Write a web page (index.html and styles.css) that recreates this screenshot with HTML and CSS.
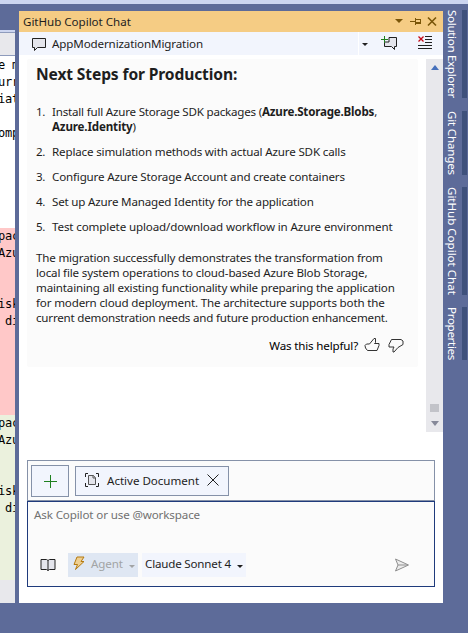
FILE: index.html
```html
<!DOCTYPE html>
<html lang="en">
<head>
<meta charset="utf-8">
<title>GitHub Copilot Chat</title>
<link rel="stylesheet" href="styles.css">
</head>
<body>
<div class="topstrip"></div>
<div class="shell">
  <aside class="editor">
    <div class="tab"></div>
    <pre class="code plain">e m
urr
iat

omp</pre>
    <pre class="code removed">pac
Azu


isk
 di</pre>
    <pre class="code added">pac
Azu


isk
 di</pre>
    <div class="editor-foot"></div>
  </aside>

  <main class="panel">
    <header class="titlebar">
      <span class="t open">GitHub Copilot Chat</span>
      <svg class="title-icons" width="44" height="21" viewBox="0 0 44 21">
        <path class="gold-fill" d="M1 8h8l-4 4z"/>
        <path class="gold" d="M16 10.5h5M21.5 7v7M21.5 8.5h5v4h-5M21.5 11.5h5M26.5 8v5"/>
        <path class="gold wide" d="M34 6.500l8 8M42 6.500l-8 8"/>
      </svg>
    </header>

    <div class="thread">
      <div class="thread-name">
        <svg width="16" height="16" viewBox="0 0 16 16"><path class="bubble" d="M1.500 2.500h13v9h-8l-3 3v-3h-2z"/></svg>
        <span class="t soft">AppModernizationMigration</span>
      </div>
      <div class="thread-tools">
        <svg width="84" height="22" viewBox="0 0 84 22">
          <path class="ink-fill" d="M3 11h6l-3 3z"/>
          <path class="bubble" d="M25.500 10v4.500h7l3 3v-3h2v-9h-7.500v4.500z"/>
          <path class="green" d="M25.500 4v7M22 7.500h7"/>
          <path class="red" d="M59.500 4.500l5 5M64.500 4.500l-5 5"/>
          <path class="ink" d="M66 4.500h7M66 7.500h7M66 10.500h7M59 13.500h14M59 16.500h14"/>
        </svg>
      </div>
    </div>

    <div class="conversation">
      <article class="message">
        <h1 class="t soft">Next Steps for Production:</h1>
        <ol>
          <li><span class="t tight">Install full Azure Storage SDK packages (<b>Azure.Storage.Blobs</b>,</span><br><span class="t"><b>Azure.Identity</b>)</span></li>
          <li><span class="t">Replace simulation methods with actual Azure SDK calls</span></li>
          <li><span class="t">Configure Azure Storage Account and create containers</span></li>
          <li><span class="t snug">Set up Azure Managed Identity for the application</span></li>
          <li><span class="t soft">Test complete upload/download workflow in Azure environment</span></li>
        </ol>
        <p>
          <span class="t snug">The migration successfully demonstrates the transformation from</span><br>
          <span class="t">local file system operations to cloud-based Azure Blob Storage,</span><br>
          <span class="t">maintaining all existing functionality while preparing the application</span><br>
          <span class="t">for modern cloud deployment. The architecture supports both the</span><br>
          <span class="t tight">current demonstration needs and future production enhancement.</span>
        </p>
        <div class="feedback">
          <span class="t">Was this helpful?</span>
          <svg width="16" height="16" viewBox="0 0 16 16"><path class="thumb" d="M1 8.500L2.500 7h3L10 1.500h1.500v4L10.500 6.500h4.500v2L13 13.500H3.500L1.500 11z"/></svg>
          <svg class="down-vote" width="16" height="16" viewBox="0 0 16 16"><path class="thumb" d="M1 7.500L3.500 2.500h9.500L15 4v3.500l-5 3-4 4.500H5v-3L6 10H1z"/></svg>
        </div>
      </article>
      <div class="scrollbar">
        <i class="arrow up"></i>
        <span class="thumb-box"></span>
        <i class="arrow down"></i>
      </div>
    </div>

    <section class="composer">
      <div class="attachments">
        <div class="add"><svg width="14" height="14" viewBox="0 0 14 14"><path class="green" d="M7.500 1v13M1 7.500h13"/></svg></div>
        <div class="chip">
          <svg width="16" height="16" viewBox="0 0 16 16"><path class="ink" d="M1.500 5V1.500H4M12 1.500h2.500V5M14.500 11v3.500H12M4 14.500H1.500V11"/><path class="bubble thin" d="M4.500 3.500h5L11.500 6v6.500h-7zM9 3.500V6h2.500"/></svg>
          <span class="t open">Active Document</span>
          <svg class="close" width="12" height="12" viewBox="0 0 12 12"><path class="ink" d="M.5.500l11 11M11.500.500l-11 11"/></svg>
        </div>
      </div>
      <div class="prompt">
        <div class="placeholder"><span class="t soft">Ask Copilot or use @workspace</span></div>
        <div class="controls">
          <svg class="book" width="16" height="14" viewBox="0 0 16 14"><path class="bubble" d="M1 1.500h5.500L8 2.500 9.500 1.500H15v10H9.500L8 12.500 6.500 11.500H1zM8 2.500v10"/></svg>
          <div class="mode">
            <svg width="12" height="15" viewBox="0 0 12 15"><path class="bolt" d="M4 1h7L8 5.500h3L2.500 13.500 4.500 8.500H1z"/></svg>
            <span class="t soft">Agent</span><i class="caret"></i>
          </div>
          <div class="model"><span class="t snug">Claude Sonnet 4</span><i class="caret"></i></div>
          <svg class="send" width="16" height="14" viewBox="0 0 16 14"><path d="M1.500 1L14.500 7l-13 6L4 7zM4 7h10"/></svg>
        </div>
      </div>
    </section>
  </main>

  <nav class="rail">
    <div class="dock d1"><span class="t dense">Solution Explorer</span></div>
    <div class="dock d2"><span class="t snug">Git Changes</span></div>
    <div class="dock d3"><span class="t open">GitHub Copilot Chat</span></div>
    <div class="dock d4"><span class="t dense">Properties</span></div>
  </nav>
</div>
</body>
</html>
```
FILE: styles.css
```css
* { box-sizing: border-box; }
body {
  margin: 0;
  width: 468px;
  height: 633px;
  overflow: hidden;
  background: #5d6b99;
  color: #1e1e1e;
  font: 11.6px/15px "Noto Sans", "Open Sans", sans-serif;
}
svg { display: block; flex: none; fill: none; }
h1, p, ol, pre { margin: 0; }

.t { white-space: nowrap; letter-spacing: -0.166px; }
.open { letter-spacing: -0.03px; }
.soft { letter-spacing: -0.13px; }
.snug { letter-spacing: -0.19px; }
.tight { letter-spacing: -0.208px; }
.dense { letter-spacing: -0.33px; }

.ink { stroke: #212121; }
.ink-fill { fill: #212121; }
.bubble { stroke: #212121; fill: #e4e5ec; }
.thin { stroke: #555; }
.green { stroke: #1f801f; }
.red { stroke: #c50b17; stroke-width: 1.3; }
.gold { stroke: #7a5508; }
.wide { stroke-width: 1.6; }
.gold-fill { fill: #7a5508; }
.thumb { stroke: #333; }

.topstrip { height: 4px; background: #ccd5f0; }
.shell { display: flex; height: 629px; }

.editor {
  width: 15px;
  height: 573px;
  margin: 26px 4px 0 0;
  overflow: hidden;
  display: flex;
  flex-direction: column;
  background: #fff;
}
.tab {
  height: 26px;
  background: #e8e8ec;
  border-top: 2px solid #ccd5f0;
  border-bottom: 1px solid #8e9bbc;
  box-shadow: inset 0 1px #8e9bbc;
}
.code {
  font: 12px/17px "DejaVu Sans Mono", monospace;
  color: #000;
  letter-spacing: -0.2px;
  width: 24px;
  margin-left: -2px;
}
.plain { height: 172px; padding-top: 1px; }
.removed { height: 187px; background: #ffc8c8; }
.added { height: 165px; background: #ebf1dd; }
.editor-foot { flex: 1; background: #e8e8ec; }

.panel {
  width: 424px;
  height: 592px;
  margin-top: 7px;
  background: #fff;
  display: flex;
  flex-direction: column;
}
.titlebar {
  height: 21px;
  padding: 0 5px 0 4px;
  display: flex;
  align-items: center;
  justify-content: space-between;
  background: #f5cc84;
}
.thread {
  height: 23px;
  display: flex;
  background: #f2f5fd;
}
.thread-name {
  width: 340px;
  padding-left: 12px;
  display: flex;
  align-items: center;
  gap: 5px;
  border-right: 1px solid #fff;
}
.thread-tools { flex: 1; }

.conversation {
  height: 373px;
  margin-top: 4px;
  display: flex;
  justify-content: space-between;
}
.message {
  width: 391px;
  height: 308px;
  margin-left: 8px;
  padding: 4px 9px;
  background: #fbfbfb;
  border-radius: 2px;
}
h1 { font-size: 15.6px; line-height: 22px; font-weight: 700; }
ol {
  margin-top: 19px;
  padding: 0;
  list-style: none;
  counter-reset: step;
  display: flex;
  flex-direction: column;
  gap: 10px;
}
li { display: grid; grid-template-columns: 16px 1fr; counter-increment: step; }
li::before { content: counter(step) "."; grid-row: 1 / span 2; letter-spacing: -0.3px; }
li br { display: none; }
li .t { grid-column: 2; }
.message p { margin-top: 16px; }
.feedback {
  margin-top: 12px;
  padding-right: 5px;
  display: flex;
  align-items: center;
  gap: 6px;
  justify-content: flex-end;
  color: #000;
}
.down-vote { margin-left: 2px; }
.scrollbar {
  width: 17px;
  padding: 6px 4px 6px;
  display: flex;
  flex-direction: column;
  align-items: center;
  background: #e8e8ec;
}
.arrow { border: 4.5px solid transparent; border-width: 0 4.5px; }
.up { border-bottom: 5px solid #4670bb; }
.down { border-top: 5px solid #868999; margin-top: 9px; }
.thumb-box { width: 9px; height: 8px; margin-top: auto; background: #c2c3c9; }

.composer { width: 408px; margin: 28px 8px 0; }
.attachments {
  height: 41px;
  padding: 4px 3px;
  display: flex;
  gap: 6px;
  background: #fbfbfb;
  border: 1px solid #8591a8;
}
.add, .chip {
  display: flex;
  align-items: center;
  background: #f2f5fd;
  border: 1px solid #8591a8;
}
.add { width: 38px; height: 32px; justify-content: center; }
.add svg { margin: -1px 1px 0 0; }
.chip { width: 154px; height: 30px; margin-top: 1px; padding: 0 0 2px 8px; gap: 7px; }
.close { margin-left: 1px; }
.prompt {
  height: 86px;
  padding: 5px 6px 0;
  background: #fbfbfb;
  border: 1px solid #1f3b7c;
}
.placeholder { color: #717171; }
.controls {
  height: 24px;
  margin-top: 31px;
  padding-left: 6px;
  display: flex;
  align-items: center;
}
.mode, .model { height: 24px; display: flex; align-items: center; padding-bottom: 3px; }
.mode {
  width: 70px;
  margin-left: 12px;
  padding-left: 5px;
  gap: 6px;
  color: #a2a4a5;
  background: #dfe7f3;
}
.model { width: 104px; margin-left: 4px; padding-left: 3px; gap: 6px; background: #f2f5fd; }
.caret {
  border: 3px solid transparent;
  border-top-color: currentColor;
  border-bottom: 0;
  margin-top: 6px;
}
.bolt { stroke: #b57a10; fill: #efcf90; }
.send { margin-left: 148px; stroke: #8f8f8f; fill: #ececec; }

.rail { width: 25px; padding-top: 6px; }
.dock {
  writing-mode: vertical-rl;
  border-right: 5px solid #3f517c;
  line-height: 19px;
  color: #fff;
}
.d1 { height: 88px; }
.d2 { height: 64px; margin-top: 13px; }
.d3 { height: 108px; margin-top: 12px; }
.d4 { height: 53px; margin-top: 12px; }
```
